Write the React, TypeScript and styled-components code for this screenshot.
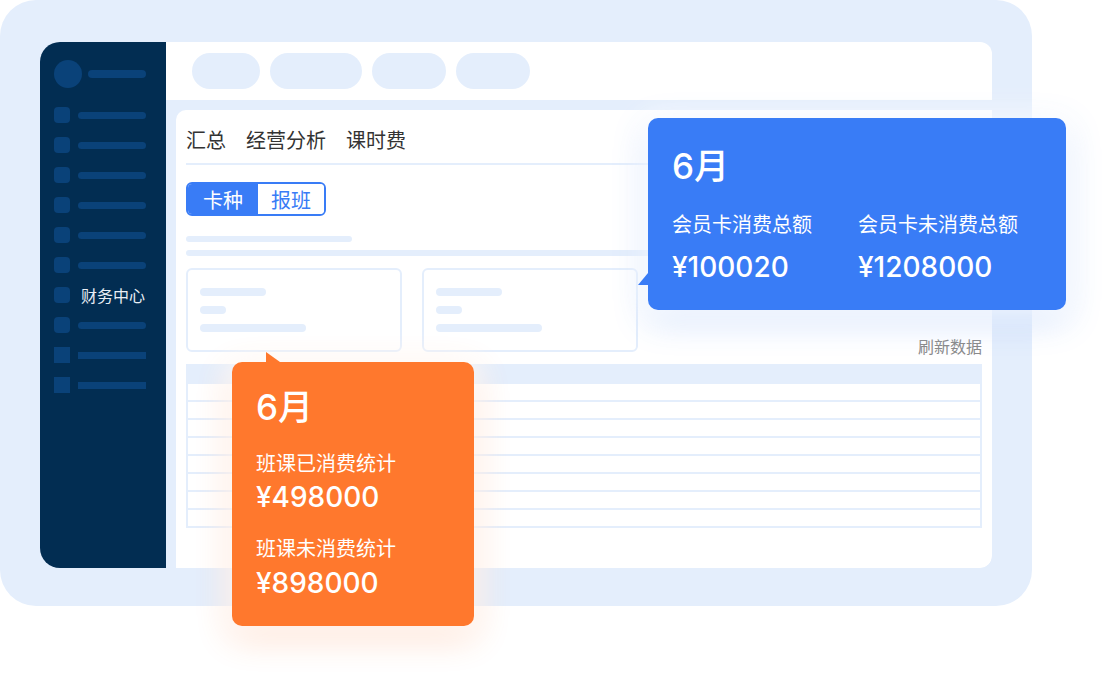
import React from "react";
import styled, { createGlobalStyle } from "styled-components";

const FRAME = "#e4eefc";
const NAVY = "#022d52";
const NAVY_ITEM = "#0a4279";
const BLUE = "#397cf6";
const ORANGE = "#ff782d";

const GlobalStyle = createGlobalStyle`
  html, body {
    margin: 0;
    padding: 0;
    background: #ffffff;
  }
  body {
    font-family: "Liberation Sans", "Noto Sans CJK SC", sans-serif;
  }
  * {
    box-sizing: border-box;
  }
`;

const menu = [
  { label: "" },
  { label: "" },
  { label: "" },
  { label: "" },
  { label: "" },
  { label: "" },
  { label: "财务中心" },
  { label: "" },
  { label: "", square: true },
  { label: "", square: true },
];

const pills = [68, 92, 74, 74];
const tabs = ["汇总", "经营分析", "课时费"];

function App() {
  return (
    <Stage>
      <GlobalStyle />
      <Frame>
        <Window>
          <Sidebar>
            <SideHeader>
              <Avatar />
              <HeaderLine />
            </SideHeader>
            <Menu>
              {menu.map((item, i) => (
                <MenuItem key={i}>
                  <MenuIcon $square={item.square} />
                  {item.label ? (
                    <MenuLabel>{item.label}</MenuLabel>
                  ) : (
                    <MenuLine $square={item.square} />
                  )}
                </MenuItem>
              ))}
            </Menu>
          </Sidebar>

          <Main>
            <TopBar>
              {pills.map((w, i) => (
                <Pill key={i} $w={w} />
              ))}
            </TopBar>
            <Body>
              <Panel>
                <Tabs>
                  {tabs.map((t) => (
                    <span key={t}>{t}</span>
                  ))}
                </Tabs>
                <Divider />
                <Segmented>
                  <Segment $active $w={70}>
                    卡种
                  </Segment>
                  <Segment $w={66}>报班</Segment>
                </Segmented>
                <SkeletonBar $w="166px" $mt={20} />
                <SkeletonBar $w="100%" $mt={8} />
                <CardsRow>
                  {[0, 1].map((i) => (
                    <Card key={i}>
                      <CardLine $w={66} />
                      <CardLine $w={26} />
                      <CardLine $w={106} />
                    </Card>
                  ))}
                  <Refresh>刷新数据</Refresh>
                </CardsRow>
                <Table>
                  <TableHead />
                  <TableRows>
                    {Array.from({ length: 8 }).map((_, i) => (
                      <TableRow key={i} />
                    ))}
                  </TableRows>
                </Table>
              </Panel>
            </Body>
          </Main>
        </Window>
      </Frame>

      <BluePopup>
        <PopTitle>6月</PopTitle>
        <StatGrid>
          <div>
            <StatLabel $mt={26}>会员卡消费总额</StatLabel>
            <StatValue $mt={15}>¥100020</StatValue>
          </div>
          <div>
            <StatLabel $mt={26}>会员卡未消费总额</StatLabel>
            <StatValue $mt={15}>¥1208000</StatValue>
          </div>
        </StatGrid>
      </BluePopup>

      <OrangePopup>
        <PopTitle>6月</PopTitle>
        <StatLabel $mt={24}>班课已消费统计</StatLabel>
        <StatValue $mt={6}>¥498000</StatValue>
        <StatLabel $mt={23}>班课未消费统计</StatLabel>
        <StatValue $mt={7}>¥898000</StatValue>
      </OrangePopup>
    </Stage>
  );
}

export default App;

const Stage = styled.div`
  position: relative;
  width: 1106px;
  height: 674px;
  overflow: hidden;
  background: #ffffff;
`;

const Frame = styled.div`
  width: 1032px;
  height: 606px;
  padding: 42px 40px 38px 40px;
  border-radius: 36px;
  background: ${FRAME};
`;

const Window = styled.div`
  display: flex;
  height: 100%;
  border-radius: 20px 12px 12px 20px;
  overflow: hidden;
`;

const Sidebar = styled.div`
  width: 126px;
  flex-shrink: 0;
  display: flex;
  flex-direction: column;
  padding: 18px 20px 0 14px;
  background: ${NAVY};
`;

const SideHeader = styled.div`
  display: flex;
  align-items: center;
  height: 28px;
`;

const Avatar = styled.div`
  width: 28px;
  height: 28px;
  border-radius: 50%;
  background: ${NAVY_ITEM};
`;

const HeaderLine = styled.div`
  flex: 1;
  height: 8px;
  margin-left: 6px;
  border-radius: 4px;
  background: ${NAVY_ITEM};
`;

const Menu = styled.div`
  display: flex;
  flex-direction: column;
  margin-top: 12px;
`;

const MenuItem = styled.div`
  display: flex;
  align-items: center;
  height: 30px;
`;

const MenuIcon = styled.div<{ $square?: boolean }>`
  width: 16px;
  height: 16px;
  flex-shrink: 0;
  border-radius: ${(p) => (p.$square ? "0" : "4px")};
  background: ${NAVY_ITEM};
`;

const MenuLine = styled.div<{ $square?: boolean }>`
  flex: 1;
  height: 7px;
  margin-left: 8px;
  border-radius: ${(p) => (p.$square ? "0" : "4px")};
  background: ${NAVY_ITEM};
`;

const MenuLabel = styled.span`
  margin-left: 11px;
  font-family: "Noto Sans CJK SC", sans-serif;
  font-size: 16px;
  line-height: 20px;
  color: #e9eef5;
`;

const Main = styled.div`
  flex: 1;
  display: flex;
  flex-direction: column;
  background: ${FRAME};
`;

const TopBar = styled.div`
  height: 58px;
  display: flex;
  align-items: center;
  gap: 10px;
  padding-left: 26px;
  background: #ffffff;
`;

const Pill = styled.div<{ $w: number }>`
  width: ${(p) => p.$w}px;
  height: 36px;
  border-radius: 18px;
  background: ${FRAME};
`;

const Body = styled.div`
  flex: 1;
  display: flex;
  padding: 10px 0 0 10px;
`;

const Panel = styled.div`
  flex: 1;
  padding: 16px 10px 0 10px;
  border-radius: 10px 0 12px 0;
  background: #ffffff;
`;

const Tabs = styled.div`
  display: flex;
  gap: 20px;
  height: 28px;
  font-family: "Noto Sans CJK SC", sans-serif;
  font-size: 20px;
  line-height: 28px;
  color: #333333;
`;

const Divider = styled.div`
  height: 2px;
  margin-top: 9px;
  background: ${FRAME};
`;

const Segmented = styled.div`
  display: flex;
  width: fit-content;
  height: 34px;
  margin-top: 17px;
  border: 2px solid ${BLUE};
  border-radius: 6px;
  overflow: hidden;
`;

const Segment = styled.div<{ $active?: boolean; $w: number }>`
  width: ${(p) => p.$w}px;
  display: flex;
  align-items: center;
  justify-content: center;
  font-family: "Noto Sans CJK SC", sans-serif;
  font-size: 20px;
  color: ${(p) => (p.$active ? "#ffffff" : BLUE)};
  background: ${(p) => (p.$active ? BLUE : "#ffffff")};
`;

const SkeletonBar = styled.div<{ $w: string; $mt: number }>`
  width: ${(p) => p.$w};
  height: 6px;
  margin-top: ${(p) => p.$mt}px;
  border-radius: 3px;
  background: ${FRAME};
`;

const CardsRow = styled.div`
  display: flex;
  align-items: flex-end;
  gap: 20px;
  margin-top: 12px;
`;

const Card = styled.div`
  width: 216px;
  height: 84px;
  display: flex;
  flex-direction: column;
  gap: 10px;
  padding: 18px 12px;
  border: 2px solid ${FRAME};
  border-radius: 6px;
`;

const CardLine = styled.div<{ $w: number }>`
  width: ${(p) => p.$w}px;
  height: 8px;
  border-radius: 4px;
  background: ${FRAME};
`;

const Refresh = styled.span`
  margin-left: auto;
  margin-bottom: -2px;
  font-family: "Noto Sans CJK SC", sans-serif;
  font-size: 16px;
  line-height: 16px;
  color: #8a8a8a;
`;

const Table = styled.div`
  margin-top: 12px;
`;

const TableHead = styled.div`
  height: 20px;
  background: ${FRAME};
`;

const TableRows = styled.div`
  border-left: 2px solid ${FRAME};
  border-right: 2px solid ${FRAME};
`;

const TableRow = styled.div`
  height: 18px;
  border-bottom: 2px solid ${FRAME};
`;

const Popup = styled.div`
  position: absolute;
  border-radius: 10px;
  color: #ffffff;
  &::before {
    content: "";
    position: absolute;
  }
`;

const BluePopup = styled(Popup)`
  left: 648px;
  top: 118px;
  width: 418px;
  height: 192px;
  padding: 28px 24px;
  background: ${BLUE};
  box-shadow: 0 0 26px 10px rgba(255, 255, 255, 0.75),
    0 10px 34px rgba(57, 124, 246, 0.28);
  &::before {
    left: -10px;
    top: 155px;
    width: 10px;
    height: 12px;
    background: ${BLUE};
    clip-path: polygon(100% 0, 100% 100%, 0 100%);
  }
`;

const OrangePopup = styled(Popup)`
  left: 232px;
  top: 362px;
  width: 242px;
  height: 264px;
  padding: 25px 24px;
  background: ${ORANGE};
  box-shadow: 0 0 26px 10px rgba(255, 255, 255, 0.7),
    0 10px 34px rgba(255, 120, 45, 0.3);
  &::before {
    left: 34px;
    top: -10px;
    width: 14px;
    height: 10px;
    background: ${ORANGE};
    clip-path: polygon(0 0, 0 100%, 100% 100%);
  }
`;

const PopTitle = styled.div`
  font-family: Inter, "Noto Sans CJK SC", sans-serif;
  font-size: 35px;
  font-weight: 500;
  line-height: 40px;
`;

const StatGrid = styled.div`
  display: grid;
  grid-template-columns: 186px 1fr;
`;

const StatLabel = styled.div<{ $mt: number }>`
  margin-top: ${(p) => p.$mt}px;
  font-family: "Noto Sans CJK SC", sans-serif;
  font-size: 20px;
  line-height: 24px;
`;

const StatValue = styled.div<{ $mt: number }>`
  margin-top: ${(p) => p.$mt}px;
  font-family: Inter, "Liberation Sans", sans-serif;
  font-size: 28px;
  font-weight: 500;
  line-height: 32px;
`;
